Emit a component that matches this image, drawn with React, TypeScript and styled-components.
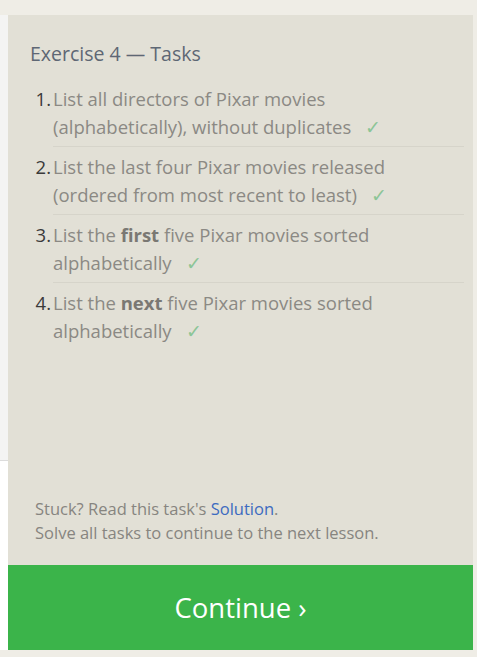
import styled, { createGlobalStyle } from 'styled-components';

const GlobalStyle = createGlobalStyle`
  html, body {
    margin: 0;
    padding: 0;
    background: #efede6;
  }
  body {
    font-family: 'Open Sans', 'Noto Sans', sans-serif;
  }
`;

const Page = styled.div`
  display: flex;
  padding: 15px 0 7px;
  height: 657px;
  box-sizing: border-box;
`;

const SideStrip = styled.div`
  width: 8px;
  display: flex;
  flex-direction: column;
  background: #ffffff;
`;

const SideTop = styled.div`
  height: 445px;
  background: #f4f4f3;
  border-bottom: 1px solid #dcdcdc;
`;

const Panel = styled.section`
  width: 465px;
  background: #e2e0d6;
  display: flex;
  flex-direction: column;
`;

const Body = styled.div`
  flex: 1;
  padding: 26px 9px 0 22px;
  display: flex;
  flex-direction: column;
`;

const Title = styled.h2`
  margin: 0 0 12px;
  font-size: 19.5px;
  font-weight: 400;
  line-height: 26px;
  color: #5e6774;
`;

const TaskList = styled.ol`
  margin: 0;
  padding: 0;
  list-style: none;
`;

const Task = styled.li<{ $last?: boolean }>`
  display: flex;
  padding: 6px 0 5px;
  border-bottom: 1px solid ${({ $last }) => ($last ? 'transparent' : '#d6d4ca')};
  margin-left: 23px;
`;

const Num = styled.span`
  width: 23px;
  margin-left: -23px;
  padding-right: 2px;
  box-sizing: border-box;
  text-align: right;
  color: #3a3a3a;
  font-size: 18.5px;
  line-height: 28px;
  flex-shrink: 0;
`;

const TaskText = styled.span`
  padding-right: 24px;
  color: #8b8984;
  font-size: 18.5px;
  line-height: 28px;

  b {
    color: #7a7873;
    font-weight: 700;
  }
`;

const Check = styled.span`
  color: #8cc596;
  margin-left: 14px;
`;

const Footer = styled.div`
  margin-top: auto;
  padding: 0 0 20px 5px;
  font-size: 16.5px;
  line-height: 24px;
  color: #878580;
`;

const SolutionLink = styled.a`
  color: #3d6bc0;
  text-decoration: none;
`;

const ContinueButton = styled.button`
  height: 85px;
  border: none;
  background: #3bb44a;
  color: #ffffff;
  font-family: inherit;
  font-size: 27.5px;
  cursor: pointer;
  display: flex;
  align-items: center;
  justify-content: center;
`;

const tasks = [
  { text: <>List all directors of Pixar movies (alphabetically), without duplicates</> },
  { text: <>List the last four Pixar movies released (ordered from most recent to least)</> },
  { text: <>List the <b>first</b> five Pixar movies sorted alphabetically</> },
  { text: <>List the <b>next</b> five Pixar movies sorted alphabetically</> },
];

export default function App() {
  return (
    <>
      <GlobalStyle />
      <Page>
        <SideStrip>
          <SideTop />
        </SideStrip>
        <Panel>
          <Body>
            <Title>Exercise 4 — Tasks</Title>
            <TaskList>
              {tasks.map((t, i) => (
                <Task key={i} $last={i === tasks.length - 1}>
                  <Num>{i + 1}.</Num>
                  <TaskText>
                    {t.text}
                    <Check>✓</Check>
                  </TaskText>
                </Task>
              ))}
            </TaskList>
            <Footer>
              Stuck? Read this task's <SolutionLink href="#">Solution</SolutionLink>.
              <br />
              Solve all tasks to continue to the next lesson.
            </Footer>
          </Body>
          <ContinueButton>Continue ›</ContinueButton>
        </Panel>
      </Page>
    </>
  );
}
